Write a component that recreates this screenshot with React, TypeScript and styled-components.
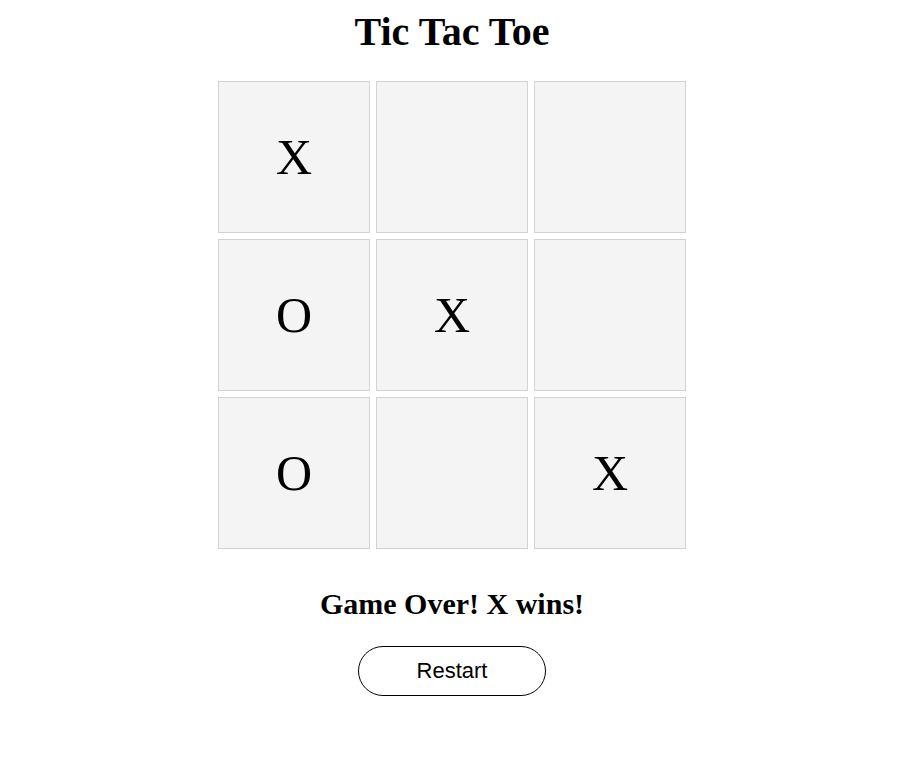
import styled, { createGlobalStyle } from 'styled-components'

type Mark = 'X' | 'O' | null

const board: Mark[] = ['X', null, null, 'O', 'X', null, 'O', null, 'X']

const GlobalStyle = createGlobalStyle`
    html, body {
        margin: 0;
        padding: 0;
        background: #fff;
        color: #000;
        font-family: "Liberation Serif", "Times New Roman", serif;
    }
`

const App = () => {
    return (
        <>
            <GlobalStyle />
            <Page>
                <Title>Tic Tac Toe</Title>
                <Board>
                    {board.map((mark, i) => (
                        <Cell key={i}>{mark}</Cell>
                    ))}
                </Board>
                <Status>Game Over! X wins!</Status>
                <RestartButton type="button">Restart</RestartButton>
            </Page>
        </>
    )
}

export default App

const Page = styled.div`
    display: flex;
    flex-direction: column;
    align-items: center;
    padding: 9px 0 0 3px;
`

const Title = styled.h1`
    margin: 0;
    font-size: 40px;
    font-weight: 700;
    line-height: 46px;
`

const Board = styled.div`
    display: grid;
    grid-template-columns: repeat(3, 152px);
    grid-auto-rows: 152px;
    gap: 6px;
    margin-top: 26px;
`

const Cell = styled.div`
    box-sizing: border-box;
    display: flex;
    align-items: center;
    justify-content: center;
    background: #f4f4f4;
    border: 1px solid #d2d2d2;
    font-size: 50px;
`

const Status = styled.h2`
    margin: 38px 0 0;
    font-size: 30px;
    font-weight: 700;
    line-height: 34px;
`

const RestartButton = styled.button`
    box-sizing: border-box;
    margin-top: 25px;
    width: 188px;
    height: 50px;
    border: 1px solid #000;
    border-radius: 25px;
    background: #fff;
    color: #000;
    font-family: "Liberation Sans", Arial, sans-serif;
    font-size: 22px;
    cursor: pointer;
`
